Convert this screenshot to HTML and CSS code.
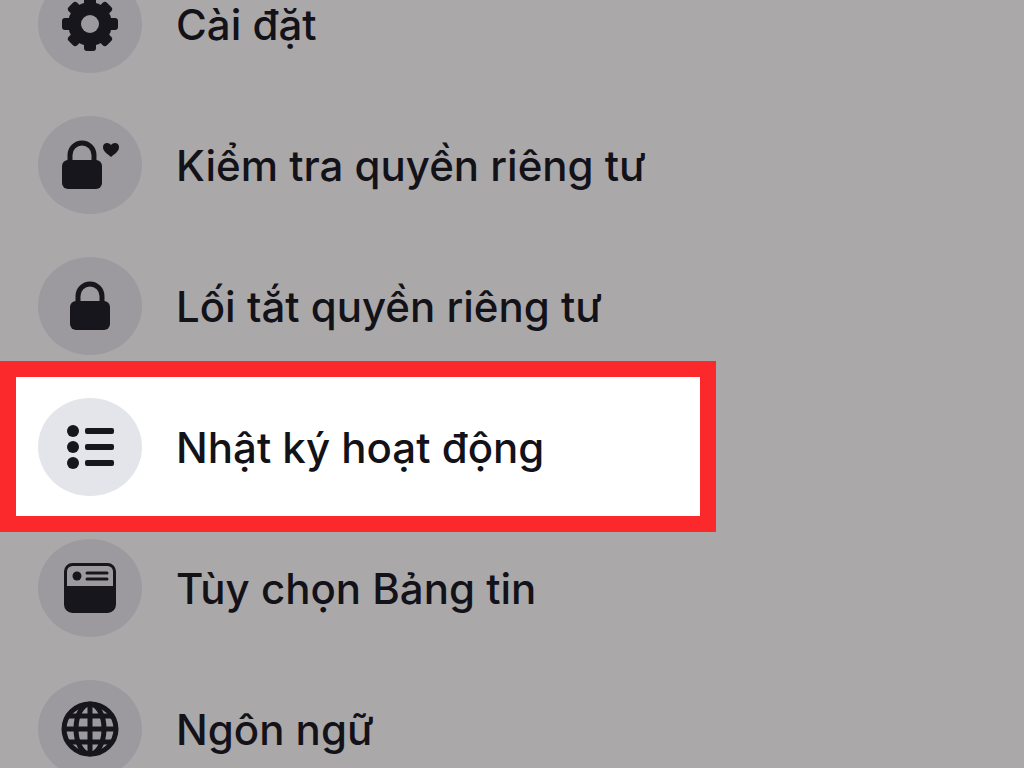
FILE: index.html
```
<!DOCTYPE html>
<html lang="vi">
<head>
    <meta charset="UTF-8">
    <meta name="viewport" content="width=device-width, initial-scale=1.0">
    <title>Cài đặt</title>
    <link rel="stylesheet" href="styles.css">
</head>
<body>
    <nav class="menu">
        <a class="item" href="#">
            <span class="icon">
                <svg width="58" height="56" viewBox="-29 -28 58 56">
                    <g fill="#17161d">
                        <circle r="22"/>
                        <rect x="-6" y="-27" width="12" height="54" rx="3"/>
                        <rect x="-28" y="-6" width="56" height="12" rx="3"/>
                        <rect x="-6" y="-27" width="12" height="54" rx="3" transform="rotate(45)"/>
                        <rect x="-6" y="-27" width="12" height="54" rx="3" transform="rotate(-45)"/>
                    </g>
                    <circle r="9" fill="#9c9a9f"/>
                </svg>
            </span>
            <span class="label">Cài đặt</span>
        </a>
        <a class="item" href="#">
            <span class="icon">
                <svg width="58" height="50" viewBox="0 0 58 50">
                    <path d="M9 23V15a12 12 0 0 1 24 0V23" fill="none" stroke="#17161d" stroke-width="5"/>
                    <rect x="1" y="20" width="40" height="29" rx="6" fill="#17161d"/>
                    <path d="M50 17C45 13 42 11 42 7C42 2 48 2 50 5C52 2 58 2 58 7C58 11 55 13 50 17Z" fill="#17161d"/>
                </svg>
            </span>
            <span class="label">Kiểm tra quyền riêng tư</span>
        </a>
        <a class="item" href="#">
            <span class="icon">
                <svg width="42" height="50" viewBox="0 0 42 50">
                    <path d="M9 23V15a12 12 0 0 1 24 0V23" fill="none" stroke="#17161d" stroke-width="5"/>
                    <rect x="1" y="20" width="40" height="29" rx="6" fill="#17161d"/>
                </svg>
            </span>
            <span class="label">Lối tắt quyền riêng tư</span>
        </a>
        <a class="item active" href="#">
            <span class="icon">
                <svg width="48" height="46" viewBox="0 0 48 46">
                    <g fill="#17161d">
                        <circle cx="7" cy="7" r="6"/>
                        <circle cx="7" cy="23" r="6"/>
                        <circle cx="7" cy="39" r="6"/>
                        <rect x="19" y="4" width="29" height="6" rx="2"/>
                        <rect x="19" y="20" width="29" height="6" rx="2"/>
                        <rect x="19" y="36" width="29" height="6" rx="2"/>
                    </g>
                </svg>
            </span>
            <span class="label">Nhật ký hoạt động</span>
        </a>
        <a class="item" href="#">
            <span class="icon">
                <svg width="52" height="50" viewBox="0 0 52 50">
                    <rect x="1.5" y="1.5" width="49" height="47" rx="7" fill="none" stroke="#17161d" stroke-width="3"/>
                    <path d="M1 23H51V42a7 7 0 0 1-7 7H8a7 7 0 0 1-7-7Z" fill="#17161d"/>
                    <circle cx="13" cy="13" r="4.5" fill="#17161d"/>
                    <path d="M23 10H43M23 16H43" stroke="#17161d" stroke-width="3" stroke-linecap="round"/>
                </svg>
            </span>
            <span class="label">Tùy chọn Bảng tin</span>
        </a>
        <a class="item" href="#">
            <span class="icon">
                <svg width="58" height="56" viewBox="-29 -28 58 56">
                    <g fill="none" stroke="#17161d" stroke-width="5">
                        <ellipse rx="26" ry="25"/>
                        <ellipse rx="14" ry="25"/>
                        <path d="M0-26V26M-27 0H27M-22-13H22M-22 13H22"/>
                    </g>
                </svg>
            </span>
            <span class="label">Ngôn ngữ</span>
        </a>
    </nav>
</body>
</html>
```
FILE: styles.css
```
body {
    margin: 0;
    background-color: #aaa8a9;
    font-family: Inter, 'Noto Sans', sans-serif;
}

/* the list is scrolled a little, so the first and last rows are cut */
.menu {
    display: flex;
    flex-direction: column;
    height: 100vh;
    overflow: hidden;
}

.item:first-child {
    margin-top: -47px;
}

.item {
    display: flex;
    flex: none;
    align-items: center;
    gap: 34px;
    box-sizing: border-box;
    height: 141px;
    width: 67%;
    margin-left: 15px;
    padding: 0 23px;
    color: #131218;
    text-decoration: none;
}

.icon {
    display: flex;
    flex: none;
    align-items: center;
    justify-content: center;
    width: 104px;
    height: 98px;
    border-radius: 50%;
    background-color: #9c9a9f;
}

.label {
    padding-top: 2px;
    font-size: 42px;
    font-weight: 500;
    line-height: 48px;
    white-space: nowrap;
}

.active {
    background-color: #fff;
    outline: 16px solid #fb282c;
    outline-offset: -1px;
}

.active .icon {
    background-color: #e4e5ea;
}
```
